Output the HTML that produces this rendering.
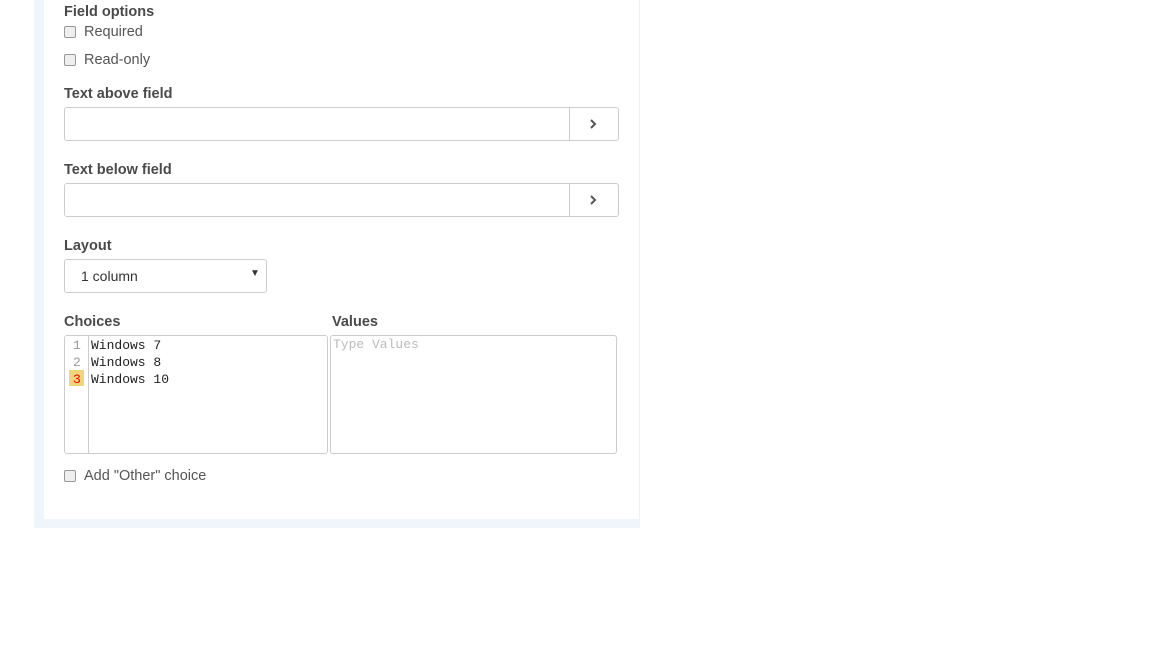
<!DOCTYPE html>
<html><head><style>
body{margin:0;width:1152px;height:648px;background:#fff;position:relative;font-family:"Liberation Sans",sans-serif;color:#555;overflow:hidden}
.outer{position:absolute;left:34px;top:0;width:606px;height:528px;background:#f0f5fc}
.inner{position:absolute;left:44px;top:0;width:595px;height:519px;background:#fff;border-right:1px solid #eef0f3}
.a{position:absolute;font-size:14.5px;white-space:nowrap}
.lbl{font-weight:bold;color:#4a4a4a}
.cb{position:absolute;width:10px;height:10px;border:1px solid #999;border-radius:2px;background:#eee}
.inp{position:absolute;left:64px;width:553px;height:32px;border:1px solid #ccc;border-radius:3px}
.btn{position:absolute;right:0;top:0;width:48px;height:32px;border-left:1px solid #ccc}
.mono{font-family:"Liberation Mono",monospace;font-size:13px}
</style></head><body>
<div class="outer"></div><div class="inner"></div>
<div class="a lbl" style="left:64px;top:4px">Field options</div>
<div class="cb" style="left:64px;top:26px"></div><div class="a" style="left:84px;top:24px">Required</div>
<div class="cb" style="left:64px;top:54px"></div><div class="a" style="left:84px;top:52px">Read-only</div>
<div class="a lbl" style="left:64px;top:86px">Text above field</div>
<div class="inp" style="top:107px"><div class="btn"><svg width="48" height="32"><path d="M21 12l4 4-4 4" fill="none" stroke="#555" stroke-width="2"/></svg></div></div>
<div class="a lbl" style="left:64px;top:162px">Text below field</div>
<div class="inp" style="top:183px"><div class="btn"><svg width="48" height="32"><path d="M21 12l4 4-4 4" fill="none" stroke="#555" stroke-width="2"/></svg></div></div>
<div class="a lbl" style="left:64px;top:238px">Layout</div>
<div style="position:absolute;left:64px;top:259px;width:201px;height:32px;border:1px solid #ccc;border-radius:3px"></div>
<div class="a" style="left:81px;top:268px;font-size:14px;color:#333">1 column</div>
<div class="a" style="left:250px;top:268px;font-size:10px;color:#333">▼</div>
<div class="a lbl" style="left:64px;top:314px">Choices</div>
<div class="a lbl" style="left:332px;top:314px">Values</div>
<div style="position:absolute;left:64px;top:335px;width:262px;height:117px;border:1px solid #ccc;border-radius:3px"></div>
<div style="position:absolute;left:88px;top:336px;width:1px;height:117px;background:#ccc"></div>
<div style="position:absolute;left:69px;top:370px;width:15px;height:16px;background:#f0d67a"></div>
<div class="a mono" style="left:73px;top:337px;color:#999;line-height:17px">1<br>2<br><span style="color:#e00">3</span></div>
<div class="a mono" style="left:91px;top:337px;color:#222;line-height:17px">Windows 7<br>Windows 8<br>Windows 10</div>
<div style="position:absolute;left:330px;top:335px;width:285px;height:117px;border:1px solid #ccc;border-radius:3px"></div>
<div class="a mono" style="left:333px;top:337px;color:#bbb">Type Values</div>
<div class="cb" style="left:64px;top:470px"></div><div class="a" style="left:84px;top:468px">Add "Other" choice</div>
</body></html>
